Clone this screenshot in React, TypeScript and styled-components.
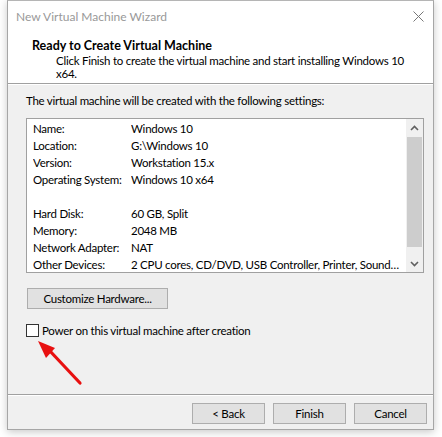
import React from "react";
import styled, { createGlobalStyle } from "styled-components";

const Global = createGlobalStyle`
  html, body { margin: 0; padding: 0; background: #ffffff; }
  body {
    font-family: Lato, "Noto Sans", sans-serif;
    font-size: 11.5px;
    letter-spacing: -0.25px;
    color: #000;
  }
  * { box-sizing: border-box; }
`;

const Page = styled.div`
  width: 442px;
  height: 437px;
  padding: 0 8px 7px 7px;
  position: relative;
  background: #fff;
`;

const Window = styled.div`
  width: 427px;
  height: 430px;
  border: 1px solid #a6a6a6;
  border-top-color: #b5b5b5;
  box-shadow: 0 2px 8px rgba(0, 0, 0, 0.22);
  background: #f0f0f0;
  display: flex;
  flex-direction: column;
`;

const TitleBar = styled.div`
  height: 31px;
  background: #fff;
  display: flex;
  align-items: center;
  justify-content: space-between;
  padding: 0 9px 0 8px;
  color: #999999;
`;

const TitleText = styled.span`
  font-size: 12px;
  letter-spacing: 0;
`;

const Header = styled.div`
  background: #fff;
  height: 52px;
  padding: 5px 0 0 24px;
  border-bottom: 1px solid #a0a0a0;
  box-shadow: 0 1px 0 #ffffff;
  white-space: nowrap;
`;

const HeaderTitle = styled.div`
  font-weight: 700;
  font-size: 12.5px;
  letter-spacing: 0;
  line-height: 17px;
`;

const HeaderSub = styled.div`
  padding-left: 24px;
  line-height: 13px;
`;

const Body = styled.div`
  flex: 1;
  padding: 9px 10px 0 18px;
  display: flex;
  flex-direction: column;
`;

const Intro = styled.div`
  line-height: 15px;
  margin-bottom: 10px;
  white-space: nowrap;
`;

const ListBox = styled.div`
  width: 398px;
  height: 155px;
  border: 1px solid #a0a0a0;
  background: #fff;
  display: flex;
`;

const Rows = styled.div`
  flex: 1;
  min-width: 0;
  padding: 1px 0 0 6px;
  overflow: hidden;
`;

const Row = styled.div`
  display: grid;
  grid-template-columns: 98px 1fr;
  height: 17px;
  line-height: 17px;
  white-space: nowrap;
`;

const Cell = styled.span`
  overflow: hidden;
  text-overflow: ellipsis;
`;

const Scrollbar = styled.div`
  width: 17px;
  display: flex;
  flex-direction: column;
  background: #f0f0f0;
`;

const ScrollArrow = styled.div`
  height: 17px;
  display: flex;
  align-items: center;
  justify-content: center;
`;

const Thumb = styled.div`
  margin: 1px 1px 0 1px;
  height: 110px;
  background: #cdcdcd;
`;

const Track = styled.div`
  flex: 1;
`;

const Button = styled.button<{ $w: number }>`
  width: ${(p) => p.$w}px;
  height: 21px;
  background: #e1e1e1;
  border: 1px solid #adadad;
  font-family: inherit;
  font-size: inherit;
  letter-spacing: inherit;
  color: #000;
  padding: 0;
  line-height: 18px;
`;

const CustomizeRow = styled.div`
  margin-top: 15px;
  padding-left: 1px;
`;

const CheckRow = styled.label`
  display: flex;
  align-items: center;
  gap: 3px;
  margin-top: 14px;
  line-height: 15px;
`;

const CheckBox = styled.span`
  width: 13px;
  height: 13px;
  border: 1px solid #333;
  background: #fff;
`;

const Footer = styled.div`
  height: 35px;
  border-top: 1px solid #a0a0a0;
  box-shadow: inset 0 1px 0 #ffffff;
  display: flex;
  justify-content: flex-end;
  gap: 8px;
  padding: 8px 6px 0 0;
`;

const Arrow = styled.svg`
  position: absolute;
  left: 30px;
  top: 335px;
`;

export default function App() {
  const rows: [string, string][] = [
    ["Name:", "Windows 10"],
    ["Location:", "G:\\Windows 10"],
    ["Version:", "Workstation 15.x"],
    ["Operating System:", "Windows 10 x64"],
    ["", ""],
    ["Hard Disk:", "60 GB, Split"],
    ["Memory:", "2048 MB"],
    ["Network Adapter:", "NAT"],
    ["Other Devices:", "2 CPU cores, CD/DVD, USB Controller, Printer, Sound\u2026"],
  ];
  return (
    <>
      <Global />
      <Page>
        <Window>
          <TitleBar>
            <TitleText>New Virtual Machine Wizard</TitleText>
            <svg width="11" height="11" viewBox="0 0 11 11">
              <path d="M0.5 0.5 L10.5 10.5 M10.5 0.5 L0.5 10.5" stroke="#777" strokeWidth="1" />
            </svg>
          </TitleBar>
          <Header>
            <HeaderTitle>Ready to Create Virtual Machine</HeaderTitle>
            <HeaderSub>
              Click Finish to create the virtual machine and start installing Windows 10
              <br />
              x64.
            </HeaderSub>
          </Header>
          <Body>
            <Intro>The virtual machine will be created with the following settings:</Intro>
            <ListBox>
              <Rows>
                {rows.map(([k, v], i) => (
                  <Row key={i}>
                    <Cell>{k}</Cell>
                    <Cell>{v}</Cell>
                  </Row>
                ))}
              </Rows>
              <Scrollbar>
                <ScrollArrow>
                  <svg width="9" height="6" viewBox="0 0 9 6">
                    <path d="M1 5 L4.5 1.5 L8 5" stroke="#606060" strokeWidth="1.6" fill="none" />
                  </svg>
                </ScrollArrow>
                <Thumb />
                <Track />
                <ScrollArrow>
                  <svg width="9" height="6" viewBox="0 0 9 6">
                    <path d="M1 1 L4.5 4.5 L8 1" stroke="#606060" strokeWidth="1.6" fill="none" />
                  </svg>
                </ScrollArrow>
              </Scrollbar>
            </ListBox>
            <CustomizeRow>
              <Button $w={141}>Customize Hardware...</Button>
            </CustomizeRow>
            <CheckRow>
              <CheckBox />
              <span>Power on this virtual machine after creation</span>
            </CheckRow>
          </Body>
          <Footer>
            <Button $w={73}>&lt; Back</Button>
            <Button $w={73}>Finish</Button>
            <Button $w={73}>Cancel</Button>
          </Footer>
        </Window>
        <Arrow width="56" height="54" viewBox="0 0 56 54">
          <path d="M50 48 L19 15" stroke="#e81010" strokeWidth="3.2" strokeLinecap="round" />
          <path d="M8 6 L25 13 L16 23 Z" fill="#e81010" />
        </Arrow>
      </Page>
    </>
  );
}
